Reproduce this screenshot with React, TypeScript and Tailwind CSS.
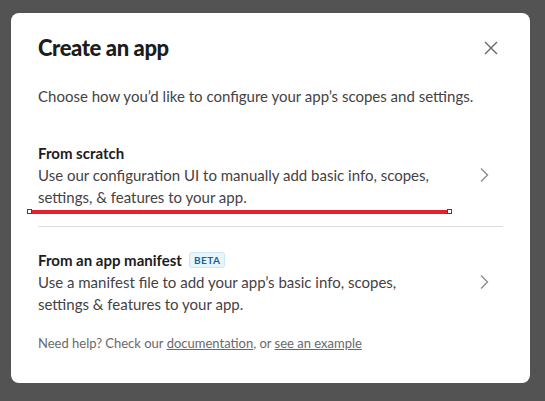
import React from 'react';

function Chevron() {
  return (
    <svg width="10" height="16" viewBox="0 0 10 16" fill="none" className="shrink-0">
      <path d="M2 1.5 L8.5 8 L2 14.5" stroke="#8c8c8c" strokeWidth="1.4" />
    </svg>
  );
}

export default function App() {
  return (
    <div
      className="relative h-screen w-full bg-[#535353] pl-[11px] pt-[13px]"
      style={{ fontFamily: 'Lato, "Open Sans", sans-serif' }}
    >
      {/* modal */}
      <div className="relative w-[519px] h-[370px] rounded-lg bg-white px-[27px] text-[#1d1c1d]">
        {/* header */}
        <div className="flex items-center justify-between pt-[21px]">
          <h1 className="text-[22px] leading-[28px] font-black tracking-[-0.4px]">Create an app</h1>
          <button className="mr-[1px] p-1 text-[#616061]">
            <svg width="14" height="14" viewBox="0 0 14 14" fill="none">
              <path d="M1 1 L13 13 M13 1 L1 13" stroke="#666" strokeWidth="1.4" />
            </svg>
          </button>
        </div>

        <p className="mt-[23px] text-[15px] leading-[22px] text-[#454245]">
          Choose how you&rsquo;d like to configure your app&rsquo;s scopes and settings.
        </p>

        {/* options */}
        <div className="mt-[35px] flex items-center justify-between pr-[14px]">
          <div className="w-[405px]">
            <div className="text-[15px] leading-[22px] font-bold">From scratch</div>
            <div className="text-[15px] leading-[22px] text-[#454245]">
              Use our configuration UI to manually add basic info, scopes, settings, &amp; features to your app.
            </div>
          </div>
          <Chevron />
        </div>

        <div className="mt-[18px] h-px bg-[#dddddd]" />

        <div className="mt-[22px] flex items-center justify-between pr-[14px]">
          <div className="w-[405px]">
            <div className="flex items-center gap-[7px] text-[15px] leading-[22px] font-bold">
              From an app manifest
              <span className="rounded-[3px] border border-[#cde4f3] bg-[#e8f5fa] px-[4px] text-[10px] leading-[14px] font-bold tracking-[0.5px] text-[#1264a3]">
                BETA
              </span>
            </div>
            <div className="text-[15px] leading-[22px] text-[#454245]">
              Use a manifest file to add your app&rsquo;s basic info, scopes, settings &amp; features to your app.
            </div>
          </div>
          <Chevron />
        </div>

        <p className="mt-[19px] text-[13px] leading-[18px] text-[#696969]">
          Need help? Check our <a className="underline">documentation</a>, or{' '}
          <a className="underline">see an example</a>
        </p>

        {/* red annotation line */}
        <div className="absolute left-[16px] top-[196px] flex items-center">
          <div className="h-[5px] w-[5px] border border-[#444] bg-white" />
          <div className="h-[4px] w-[415px] bg-[#e8202a]" />
          <div className="h-[5px] w-[5px] border border-[#444] bg-white" />
        </div>
      </div>
    </div>
  );
}
